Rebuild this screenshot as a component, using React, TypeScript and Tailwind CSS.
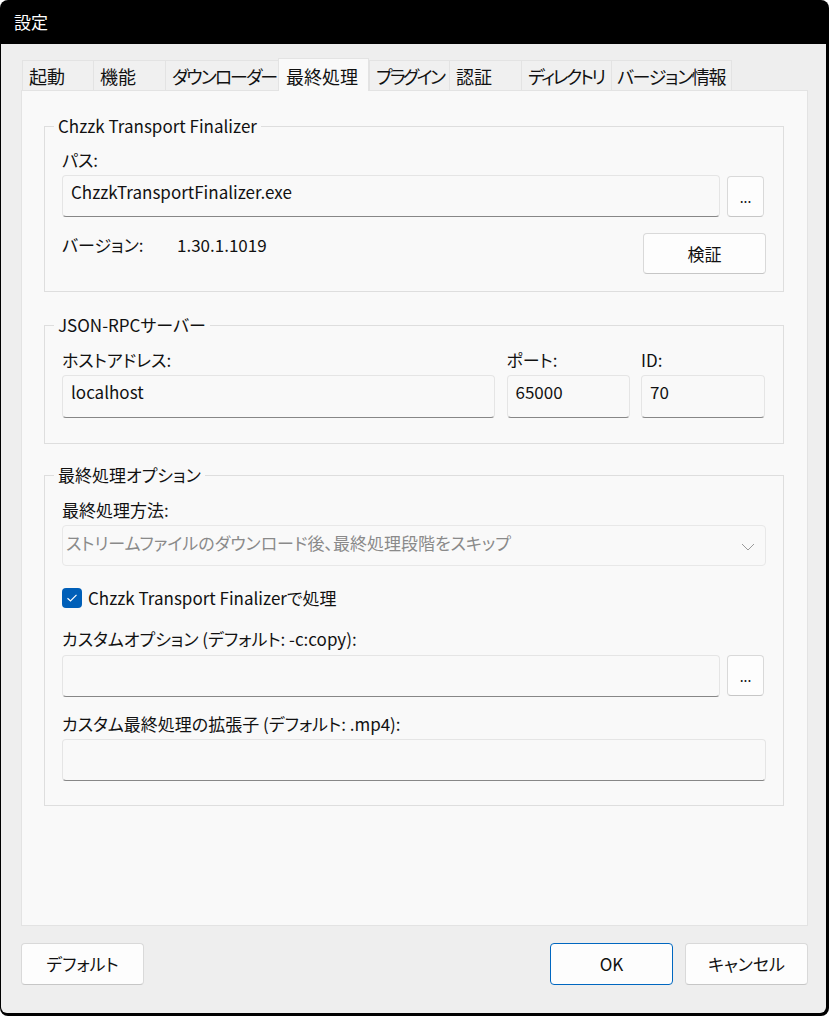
import React from "react";

const FONT = { fontFamily: '"Noto Sans CJK JP", "Noto Sans", sans-serif' };

function Tab({ label, w, selected, track = "" }: { label: string; w: number; selected?: boolean; track?: string }) {
  if (selected) {
    return (
      <div
        className="relative z-10 -mb-px h-[33px] bg-[#f9f9f9] border border-b-0 border-[#e3e3e3] pl-[7px] pt-[2px] leading-[30px] text-[18px] text-[#111111] whitespace-nowrap"
        style={{ width: w }}
      >
        {label}
      </div>
    );
  }
  return (
    <div
      className={
        "h-[30px] bg-[#f0f0f0] border-t border-l border-[#e3e3e3] pl-[6px] leading-[30px] text-[18px] text-[#111111] whitespace-nowrap " +
        track
      }
      style={{ width: w }}
    >
      {label}
    </div>
  );
}

function TextInput({ value, w, h = 42 }: { value?: string; w?: number; h?: number }) {
  return (
    <div
      className="bg-[#f9f9f9] border border-[#e5e5e5] border-b-[#878787] rounded-[4px] pl-[8px] pt-[4px] text-[17px] leading-[24px] text-[#111111]"
      style={{ width: w, height: h }}
    >
      {value}
    </div>
  );
}

function Btn({ label, w, h, primary }: { label: string; w: number; h: number; primary?: boolean }) {
  return (
    <div
      className={
        "flex items-center justify-center rounded-[4px] bg-[#fdfdfd] text-[17px] text-[#111111] border " +
        (primary ? "border-[#0067c0]" : "border-[#d9d9d9] border-b-[#c6c6c6]")
      }
      style={{ width: w, height: h }}
    >
      {label}
    </div>
  );
}

function DotsBtn({ h }: { h: number }) {
  return (
    <div
      className="flex items-center justify-center w-[37px] rounded-[4px] bg-[#fdfdfd] border border-[#d9d9d9] border-b-[#c6c6c6] text-[14px] text-[#111111] ml-[7px] pt-[2px]"
      style={{ height: h }}
    >
      ...
    </div>
  );
}

function Label({ children, className = "" }: { children: React.ReactNode; className?: string }) {
  return <div className={"h-[24px] leading-[24px] text-[17px] text-[#111111] whitespace-nowrap " + className}>{children}</div>;
}

function Group({ title, children, className = "" }: { title: string; children: React.ReactNode; className?: string }) {
  return (
    <fieldset className={"border border-[#dedede] pl-[17px] pr-[17px] " + className}>
      <legend className="-ml-[8px] px-[4px] h-[24px] leading-[24px] text-[17px] text-[#111111] whitespace-nowrap">{title}</legend>
      {children}
    </fieldset>
  );
}

export default function App() {
  return (
    <div className="w-[829px] h-[1016px] bg-white [font-feature-settings:'palt'_1]" style={FONT}>
      <div className="w-full h-full bg-black rounded-[8px] flex flex-col pl-[1px] pr-[3px] pb-[3px]">
        <div className="h-[44px] shrink-0 flex items-center pl-[13px] text-[17px] text-white">設定</div>
        <div className="flex-1 bg-[#eeeeee] rounded-b-[6px] flex flex-col pl-[20px] pr-[18px] pt-[14px]">
          <div className="flex items-end h-[32px] pl-[1px]">
            <Tab label="起動" w={71} />
            <Tab label="機能" w={72} />
            <Tab label="ダウンローダー" w={113} track="tracking-[-2px]" />
            <Tab label="最終処理" w={91} selected />
            <Tab label="プラグイン" w={80} track="tracking-[-2.6px]" />
            <Tab label="認証" w={72} />
            <Tab label="ディレクトリ" w={90} track="tracking-[-2.4px]" />
            <div className="h-[30px] w-[121px] bg-[#f0f0f0] border-t border-l border-r border-[#e3e3e3] pl-[5px] leading-[30px] text-[18px] tracking-[-1.3px] text-[#111111] whitespace-nowrap">
              バージョン情報
            </div>
          </div>
          <div className="h-[836px] bg-[#f9f9f9] border border-[#e3e3e3] pl-[22px] pr-[23px] pt-[23px]">
            <Group title="Chzzk Transport Finalizer" className="pb-[17px]">
              <Label className="mt-[10px]">パス:</Label>
              <div className="flex mt-[3px]">
                <TextInput value="ChzzkTransportFinalizer.exe" w={658} />
                <div className="pt-[1px]">
                  <DotsBtn h={41} />
                </div>
              </div>
              <div className="flex mt-[16px] items-start justify-between">
                <div className="flex">
                  <Label className="w-[115px]">バージョン:</Label>
                  <Label>1.30.1.1019</Label>
                </div>
                <Btn label="検証" w={123} h={41} />
              </div>
            </Group>

            <Group title="JSON-RPCサーバー" className="mt-[21px] pb-[25px]">
              <div className="grid grid-cols-[433px_123px_124px] gap-x-[11.5px] mt-[11px]">
                <Label>ホストアドレス:</Label>
                <Label>ポート:</Label>
                <Label>ID:</Label>
                <div className="mt-[3px]">
                  <TextInput value="localhost" w={433} h={43} />
                </div>
                <div className="mt-[3px]">
                  <TextInput value="65000" w={123} h={43} />
                </div>
                <div className="mt-[3px]">
                  <TextInput value="70" w={124} h={43} />
                </div>
              </div>
            </Group>

            <Group title="最終処理オプション" className="mt-[19px] pb-[24px]">
              <Label className="mt-[11px]">最終処理方法:</Label>
              <div className="mt-[3px] h-[41px] w-[704px] bg-[#f9f9f9] border border-[#e8e8e8] rounded-[4px] flex items-center justify-between pl-[3px] pr-[10px] text-[17px] text-[#8a8a8a]">
                <span className="-mt-[6px] whitespace-nowrap">ストリームファイルのダウンロード後、最終処理段階をスキップ</span>
                <svg width="14" height="8" viewBox="0 0 14 8" className="mt-[2px]">
                  <path d="M1 1 L7 7 L13 1" fill="none" stroke="#9a9a9a" strokeWidth="1" />
                </svg>
              </div>
              <div className="flex items-center mt-[21px] h-[22px]">
                <div className="w-[20px] h-[20px] rounded-[4px] bg-[#005fb8] flex items-center justify-center">
                  <svg width="12" height="10" viewBox="0 0 12 10">
                    <path d="M1.5 5.2 L4.5 8 L10.5 1.8" fill="none" stroke="white" strokeWidth="1.2" />
                  </svg>
                </div>
                <span className="ml-[6px] text-[17px] text-[#111111] leading-[24px] whitespace-nowrap">Chzzk Transport Finalizerで処理</span>
              </div>
              <Label className="mt-[18px]">カスタムオプション (デフォルト: -c:copy):</Label>
              <div className="flex mt-[4px]">
                <TextInput w={658} />
                <DotsBtn h={41} />
              </div>
              <Label className="mt-[15px]">カスタム最終処理の拡張子 (デフォルト: .mp4):</Label>
              <div className="mt-[3px]">
                <TextInput w={704} />
              </div>
            </Group>
          </div>
          <div className="flex justify-between mt-[17px]">
            <Btn label="デフォルト" w={123} h={42} />
            <div className="flex gap-[12px]">
              <Btn label="OK" w={123} h={42} primary />
              <Btn label="キャンセル" w={123} h={42} />
            </div>
          </div>
        </div>
      </div>
    </div>
  );
}
